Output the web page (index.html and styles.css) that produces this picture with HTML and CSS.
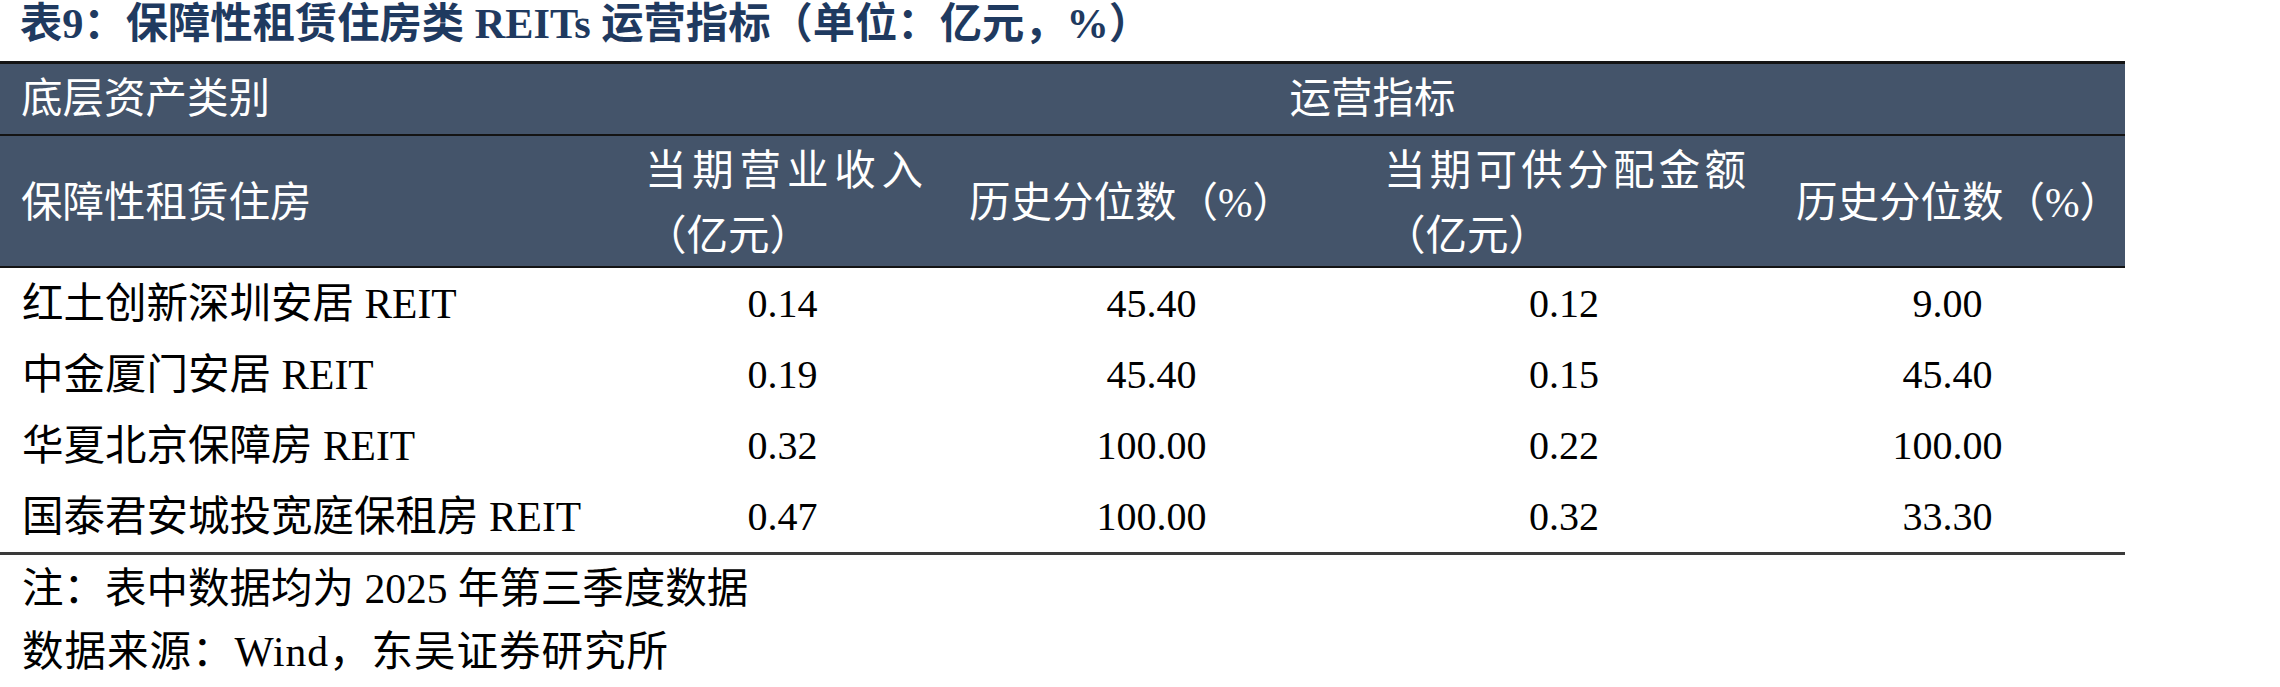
FILE: index.html
```html
<!DOCTYPE html>
<html lang="zh-CN">
<head>
<meta charset="utf-8">
<title>表9 保障性租赁住房类 REITs 运营指标</title>
<link rel="stylesheet" href="styles.css">
</head>
<body>
<div class="page">
  <h1 class="title">表9：保障性租赁住房类 REITs 运营指标（单位：亿元，%）</h1>
  <div class="table">
    <div class="head1">
      <div class="cell left">底层资产类别</div>
      <div class="cell center">运营指标</div>
    </div>
    <div class="head2">
      <div class="cell left">保障性租赁住房</div>
      <div class="cell two c1"><span class="jline">当期营业收入</span><span class="line">（亿元）</span></div>
      <div class="cell left p2">历史分位数（%）</div>
      <div class="cell two c3"><span class="jline">当期可供分配金额</span><span class="line">（亿元）</span></div>
      <div class="cell left p4">历史分位数（%）</div>
    </div>
    <div class="body">
      <div class="row">
        <div class="cell name">红土创新深圳安居 REIT</div>
        <div class="cell num">0.14</div>
        <div class="cell num">45.40</div>
        <div class="cell num">0.12</div>
        <div class="cell num">9.00</div>
      </div>
      <div class="row">
        <div class="cell name">中金厦门安居 REIT</div>
        <div class="cell num">0.19</div>
        <div class="cell num">45.40</div>
        <div class="cell num">0.15</div>
        <div class="cell num">45.40</div>
      </div>
      <div class="row">
        <div class="cell name">华夏北京保障房 REIT</div>
        <div class="cell num">0.32</div>
        <div class="cell num">100.00</div>
        <div class="cell num">0.22</div>
        <div class="cell num">100.00</div>
      </div>
      <div class="row">
        <div class="cell name">国泰君安城投宽庭保租房 REIT</div>
        <div class="cell num">0.47</div>
        <div class="cell num">100.00</div>
        <div class="cell num">0.32</div>
        <div class="cell num">33.30</div>
      </div>
    </div>
  </div>
  <div class="notes">
    <p class="note">注：表中数据均为 2025 年第三季度数据</p>
    <p class="note source">数据来源：Wind，东吴证券研究所</p>
  </div>
</div>
</body>
</html>
```

FILE: styles.css
```css
html, body {
  margin: 0;
  padding: 0;
  background: #ffffff;
}

.page {
  width: 2280px;
  height: 687px;
  font-family: "Liberation Serif", "Noto Sans CJK SC", serif;
  font-size: 41.5px;
  color: #000000;
}

.title {
  margin: 0;
  padding-left: 20px;
  height: 61px;
  font-size: 42.3px;
  line-height: 48px;
  font-weight: 700;
  color: #1f3a60;
  white-space: nowrap;
}

.table {
  width: 2125px;
  border-top: 3px solid #141414;
  border-bottom: 3px solid #3a3a3a;
}

.head1,
.head2 {
  background: #44546a;
  color: #ffffff;
  display: grid;
}

.head1 {
  grid-template-columns: 620px 1fr;
  height: 70px;
  border-bottom: 2px solid #141414;
}

.head2 {
  grid-template-columns: 620px 325px 413px 412px 355px;
  height: 130px;
  border-bottom: 2px solid #141414;
}

.row {
  display: grid;
  grid-template-columns: 620px 325px 413px 412px 355px;
  height: 71px;
}

.cell {
  display: flex;
  align-items: center;
  white-space: nowrap;
  line-height: 48px;
}

.left {
  padding-left: 21px;
}

.center {
  justify-content: center;
}

.p2 {
  padding-left: 24px;
}

.p4 {
  padding-left: 26px;
}

.two {
  flex-direction: column;
  align-items: stretch;
  justify-content: center;
  padding-top: 3px;
}

.two .jline,
.two .line {
  display: block;
  line-height: 65px;
}

.two .jline {
  text-align: justify;
  text-align-last: justify;
}

.c1 {
  padding-left: 25px;
  padding-right: 22px;
}

.c3 {
  padding-left: 26px;
  padding-right: 24px;
}

.name {
  padding-left: 22px;
}

.num {
  justify-content: center;
  font-size: 40px;
}

.notes {
  padding-top: 3px;
}

.note {
  margin: 0;
  padding-left: 22px;
  line-height: 63px;
  white-space: nowrap;
}

.source {
  letter-spacing: 1px;
}
```
